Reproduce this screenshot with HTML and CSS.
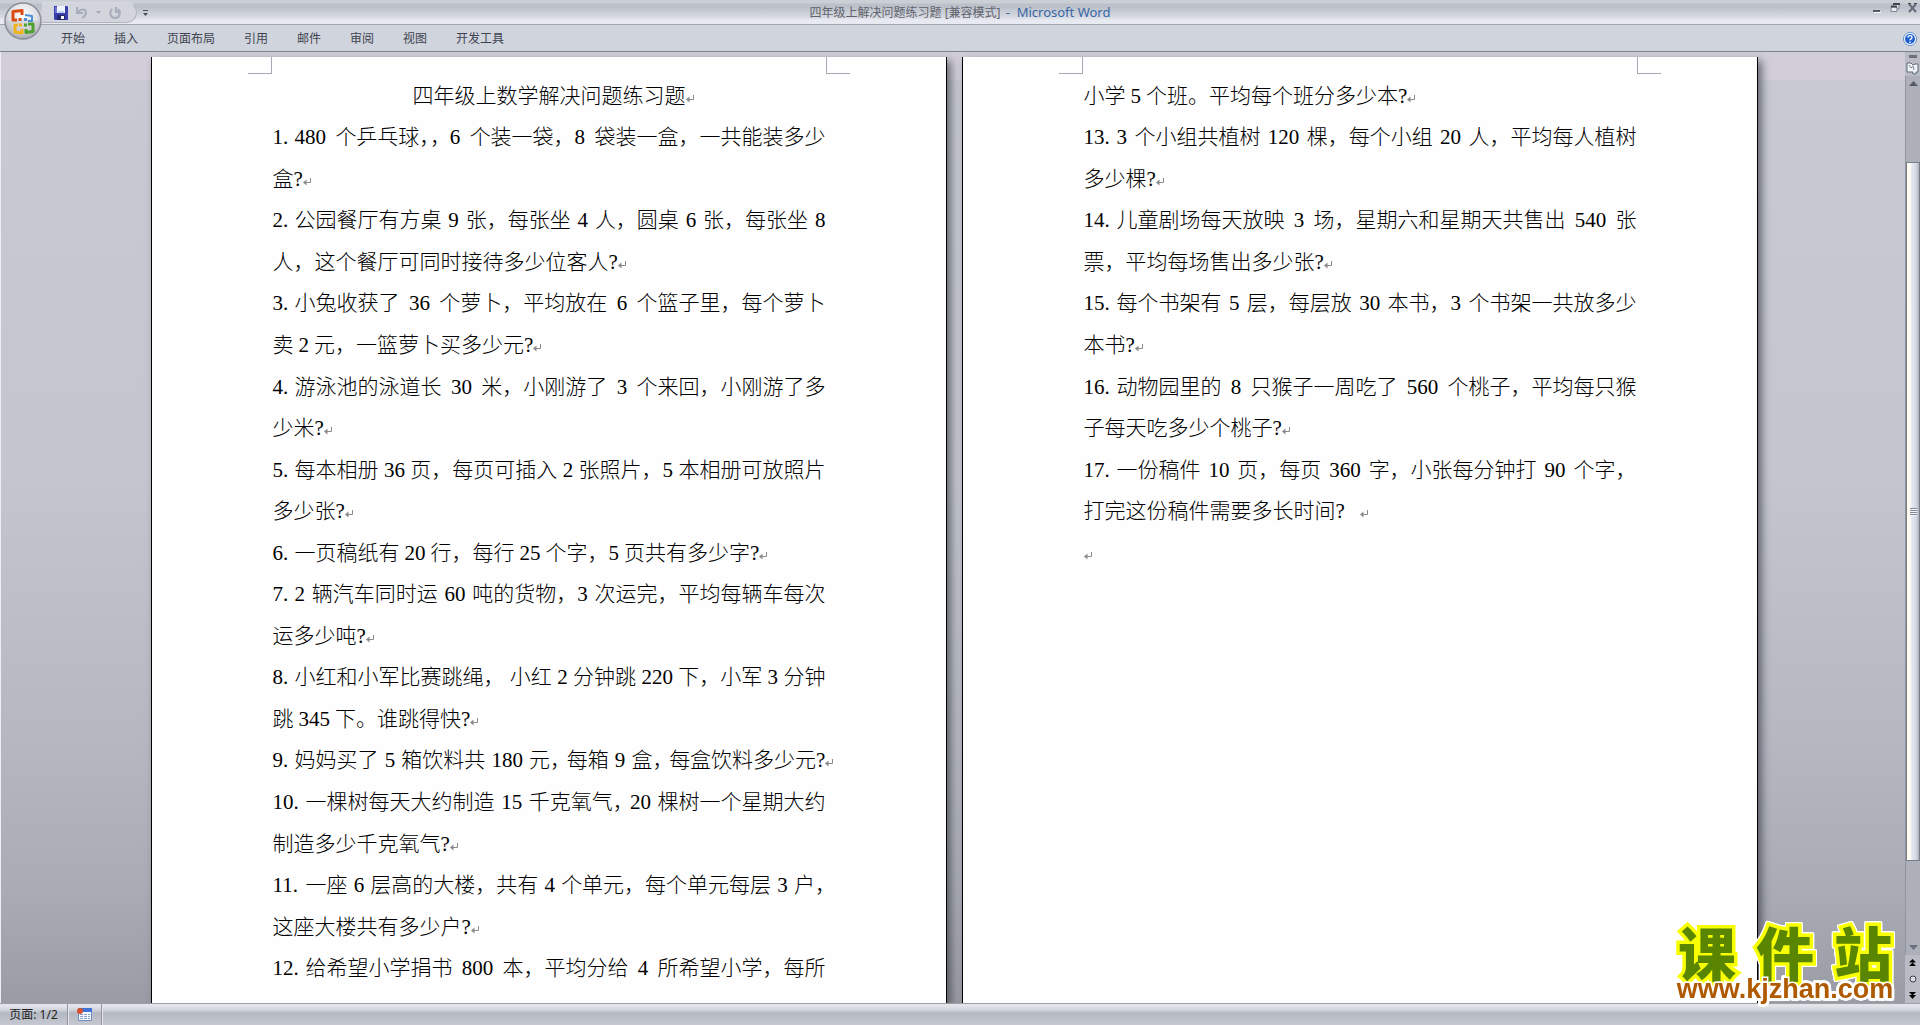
FILE: index.html
```html
<!DOCTYPE html>
<html lang="zh-CN">
<head>
<meta charset="utf-8">
<meta name="viewport" content="width=device-width, initial-scale=1">
<title>四年级上解决问题练习题 [兼容模式] - Microsoft Word</title>
<link rel="stylesheet" href="styles.css">
</head>
<body>
<svg class="defs" aria-hidden="true">
  <symbol id="ret" viewBox="0 0 9 9"><path d="M7.5 1v4.5H2" fill="none" stroke="#8a8a8a"/><path d="M0 5.500l3.500-3v6z" fill="#8a8a8a"/></symbol>
</svg>

<header class="titlebar">
  <div class="quick">
    <div class="pill">
      <button aria-label="保存"><svg width="14" height="14" viewBox="0 0 14 14"><path d="M1 0h12l1 1v13H1l-1-1V0z" fill="#3a3fae"/><path d="M1 1h3v6H1z" fill="#6a78dc"/><path d="M3 0h8v7H3z" fill="#eef3ff"/><path d="M4 5h6v2H4z" fill="#b9d0f6"/><path d="M3 9h8v5H3z" fill="#25286c"/><path d="M7 10h3v3H7z" fill="#fff"/></svg></button>
      <button aria-label="撤消"><svg width="14" height="14" viewBox="0 0 14 14"><path d="M2 1v6h6M2.500 6.500C5 3 11 2 11 6.500c0 3-2 4-4 5.500" fill="none" stroke="#a9adbb" stroke-width="2"/></svg></button>
      <button class="drop" aria-label="撤消列表"><svg width="5" height="4" viewBox="0 0 5 4"><path d="M0 0h5L2.500 3z" fill="#a4a8b4"/></svg></button>
      <button aria-label="重复"><svg width="14" height="14" viewBox="0 0 14 14"><path d="M4 3C1 6 2 12 7 12s6-6 3-9M8 1v5h5" fill="none" stroke="#a9adbb" stroke-width="2"/></svg></button>
    </div>
    <button class="custom" aria-label="自定义快速访问工具栏"><svg width="5" height="6" viewBox="0 0 5 6"><path d="M0 0h5v1H0zM0 3h5L2.500 6z" fill="#4a4d55"/></svg></button>
  </div>
  <h1 class="caption">四年级上解决问题练习题 [兼容模式] <span class="app">- &nbsp;Microsoft Word</span></h1>
  <div class="controls">
    <button aria-label="最小化"><svg width="10" height="10" viewBox="0 0 10 10"><path d="M1 7h7v2H1z" fill="#54575f"/><path d="M2 9h7v1H2z" fill="#fff"/></svg></button>
    <button aria-label="还原"><svg width="10" height="10" viewBox="0 0 10 10"><path d="M3 1.500h6V6H7M1 4h6v4.500H1z" fill="#e8ebf1" stroke="#7b8496"/><path d="M3 1h7M1 3.500h6" stroke="#42454c" stroke-width="2"/></svg></button>
    <button aria-label="关闭"><svg width="10" height="10" viewBox="0 0 10 10"><path d="M1 1l7 8M8 1L1 9" stroke="#656d7d" stroke-width="2"/><path d="M0 .5h3M6 .5h3" stroke="#42454c"/></svg></button>
  </div>
  <button class="orb" aria-label="Office 按钮">
    <svg width="38" height="38" viewBox="0 0 38 38">
      <defs><radialGradient id="orb" cx=".5" cy=".35" r=".65"><stop offset="0" stop-color="#fff"/><stop offset=".6" stop-color="#dfe1e6"/><stop offset="1" stop-color="#a3a7b0"/></radialGradient></defs>
      <circle cx="19" cy="19" r="18" fill="url(#orb)" stroke="#8b8e96" stroke-width="1.500"/>
      <path d="M3 20a16 12 0 0 0 32 0c-8-4-24-4-32 0z" fill="#c4c7ce" opacity=".55"/>
      <g fill="none" stroke-width="3" stroke-linejoin="round">
        <path d="M13 18H9V9.500l9-1V13" stroke="#dc4a12"/>
        <path d="M21 13l7 1V19h-4" stroke="#4b8fd8" stroke-width="2"/>
        <path d="M14 23h-3v7l7 1v-4" stroke="#f2b21c"/>
        <path d="M24 22h5v7.500l-7 1V27" stroke="#4fa02c"/>
      </g>
      <path d="M14.500 16h3v3h-3z" fill="#dc4a12"/><path d="M20 16h3v3h-3z" fill="#4b8fd8"/><path d="M15 21.500h3v3h-3z" fill="#f2b21c"/><path d="M20 21.500h3v3h-3z" fill="#4fa02c"/>
    </svg>
  </button>
</header>

<nav class="ribbon">
  <div class="tabs">
    <button>开始</button><button>插入</button><button>页面布局</button><button>引用</button><button>邮件</button><button>审阅</button><button>视图</button><button>开发工具</button>
  </div>
  <button class="help" aria-label="帮助"><svg width="14" height="14" viewBox="0 0 14 14"><circle cx="7" cy="7" r="6.500" fill="#fff" stroke="#5f8fc9"/><circle cx="7" cy="7" r="5" fill="#1f5fd0"/><path d="M5 5.500c0-2.500 4-2.500 4 0 0 1.500-2 1.300-2 2.800M7 9.500V11" fill="none" stroke="#fff" stroke-width="1.400"/></svg></button>
</nav>

<div class="work">
  <main class="desk">
    <section class="page" aria-label="第 1 页">
      <div class="marks"><i class="mark-l"></i><i class="mark-r"></i></div>
      <article class="text">
        <h2><span class="line mid"><span>四年级上数学解决问题练习题<svg class="ret"><use href="#ret"/></svg></span></span></h2>
        <p><span class="line fill"><span><b class="n1">1.</b>480</span><span>个乒乓球，<b class="half">，</b></span><span>6</span><span>个装一袋，8</span><span>袋装一盒，一共能装多少</span></span>
        <span class="line"><span>盒?<svg class="ret"><use href="#ret"/></svg></span></span></p>
        <p><span class="line fill"><span><b class="n1">2.</b>公园餐厅有方桌</span><span>9</span><span>张，每张坐</span><span>4</span><span>人，圆桌</span><span>6</span><span>张，每张坐</span><span>8</span></span>
        <span class="line"><span>人，这个餐厅可同时接待多少位客人?<svg class="ret"><use href="#ret"/></svg></span></span></p>
        <p><span class="line fill"><span><b class="n1">3.</b>小兔收获了</span><span>36</span><span>个萝卜，平均放在</span><span>6</span><span>个篮子里，每个萝卜</span></span>
        <span class="line"><span>卖</span><span>2</span><span>元，一篮萝卜买多少元?<svg class="ret"><use href="#ret"/></svg></span></span></p>
        <p><span class="line fill"><span><b class="n1">4.</b>游泳池的泳道长</span><span>30</span><span>米，小刚游了</span><span>3</span><span>个来回，小刚游了多</span></span>
        <span class="line"><span>少米?<svg class="ret"><use href="#ret"/></svg></span></span></p>
        <p><span class="line fill"><span><b class="n1">5.</b>每本相册</span><span>36</span><span>页，每页可插入</span><span>2</span><span>张照片，5</span><span>本相册可放照片</span></span>
        <span class="line"><span>多少张?<svg class="ret"><use href="#ret"/></svg></span></span></p>
        <p><span class="line"><span><b class="n1">6.</b>一页稿纸有</span><span>20</span><span>行，每行</span><span>25</span><span>个字，5</span><span>页共有多少字?<svg class="ret"><use href="#ret"/></svg></span></span></p>
        <p><span class="line fill"><span><b class="n1">7.</b>2</span><span>辆汽车同时运</span><span>60</span><span>吨的货物，3</span><span>次运完，平均每辆车每次</span></span>
        <span class="line"><span>运多少吨?<svg class="ret"><use href="#ret"/></svg></span></span></p>
        <p><span class="line fill"><span><b class="n1">8.</b>小红和小军比赛跳绳，</span><span>小红</span><span>2</span><span>分钟跳</span><span>220</span><span>下，小军</span><span>3</span><span>分钟</span></span>
        <span class="line"><span>跳</span><span>345</span><span>下。谁跳得快?<svg class="ret"><use href="#ret"/></svg></span></span></p>
        <p><span class="line fill"><span><b class="n1">9.</b>妈妈买了</span><span>5</span><span>箱饮料共</span><span>180</span><span>元<b class="half">，</b></span><span>每箱</span><span>9</span><span>盒<b class="half">，</b></span><span>每盒饮料多少元?<svg class="ret"><use href="#ret"/></svg></span></span></p>
        <p><span class="line fill"><span><b class="n2">10.</b>一棵树每天大约制造</span><span>15</span><span>千克氧气<b class="half">，</b></span><span>20</span><span>棵树一个星期大约</span></span>
        <span class="line"><span>制造多少千克氧气?<svg class="ret"><use href="#ret"/></svg></span></span></p>
        <p><span class="line fill"><span><b class="n2">11.</b>一座</span><span>6</span><span>层高的大楼，共有</span><span>4</span><span>个单元，每个单元每层</span><span>3</span><span>户<b class="half">，</b></span></span>
        <span class="line"><span>这座大楼共有多少户?<svg class="ret"><use href="#ret"/></svg></span></span></p>
        <p><span class="line fill"><span><b class="n2">12.</b>给希望小学捐书</span><span>800</span><span>本，平均分给</span><span>4</span><span>所希望小学，每所</span></span></p>
      </article>
    </section>
    <section class="page" aria-label="第 2 页">
      <div class="marks"><i class="mark-l"></i><i class="mark-r"></i></div>
      <article class="text">
        <p><span class="line"><span>小学</span><span>5</span><span>个班。平均每个班分多少本?<svg class="ret"><use href="#ret"/></svg></span></span></p>
        <p><span class="line fill"><span><b class="n2">13.</b>3</span><span>个小组共植树</span><span>120</span><span>棵，每个小组</span><span>20</span><span>人，平均每人植树</span></span>
        <span class="line"><span>多少棵?<svg class="ret"><use href="#ret"/></svg></span></span></p>
        <p><span class="line fill"><span><b class="n2">14.</b>儿童剧场每天放映</span><span>3</span><span>场，星期六和星期天共售出</span><span>540</span><span>张</span></span>
        <span class="line"><span>票，平均每场售出多少张?<svg class="ret"><use href="#ret"/></svg></span></span></p>
        <p><span class="line fill"><span><b class="n2">15.</b>每个书架有</span><span>5</span><span>层，每层放</span><span>30</span><span>本书，3</span><span>个书架一共放多少</span></span>
        <span class="line"><span>本书?<svg class="ret"><use href="#ret"/></svg></span></span></p>
        <p><span class="line fill"><span><b class="n2">16.</b>动物园里的</span><span>8</span><span>只猴子一周吃了</span><span>560</span><span>个桃子，平均每只猴</span></span>
        <span class="line"><span>子每天吃多少个桃子?<svg class="ret"><use href="#ret"/></svg></span></span></p>
        <p><span class="line fill"><span><b class="n2">17.</b>一份稿件</span><span>10</span><span>页，每页</span><span>360</span><span>字，小张每分钟打</span><span>90</span><span>个字，</span></span>
        <span class="line wide"><span>打完这份稿件需要多长时间?</span><span><svg class="ret"><use href="#ret"/></svg></span></span></p>
        <p><span class="line"><span><svg class="ret"><use href="#ret"/></svg></span></span></p>
      </article>
    </section>
  </main>

  <aside class="scroll" aria-label="垂直滚动条">
    <i class="split"></i>
    <button class="ruler" aria-label="标尺"><svg width="13" height="13" viewBox="0 0 13 13"><path d="M1 1h4l2 2 2-1h3v8h-2v2H7v-2H1z" fill="#f1f2f5" stroke="#5d6a7c"/><path d="M3 3l2 3 2-2 1 4" fill="none" stroke="#7b8798"/></svg></button>
    <div class="track">
      <button aria-label="向上滚动"><svg width="9" height="5" viewBox="0 0 9 5"><path d="M0 5L4.500 0 9 5z" fill="#555963"/></svg></button>
      <div class="thumb"><i></i></div>
      <button class="down" aria-label="向下滚动"><svg width="9" height="5" viewBox="0 0 9 5"><path d="M0 0h9L4.500 5z" fill="#6b7080"/></svg></button>
    </div>
    <div class="browse">
      <button aria-label="前一页"><svg width="7" height="8" viewBox="0 0 7 8"><path d="M0 3.500L3.500 0 7 3.500zM0 7l3.500-3.500L7 7z"/></svg></button>
      <button aria-label="选择浏览对象"><svg width="8" height="8" viewBox="0 0 8 8"><circle cx="4" cy="4" r="3" fill="#d9dbe0" stroke="#3e4148"/></svg></button>
      <button aria-label="下一页"><svg width="7" height="8" viewBox="0 0 7 8"><path d="M0 1h7L3.500 4.500zM0 4h7L3.500 8z"/></svg></button>
    </div>
  </aside>

  <a class="brand" href="http://www.kjzhan.com">
    <span class="name"><span>课</span><span>件</span><span>站</span></span>
    <span class="site">www.kjzhan.com</span>
  </a>
</div>

<footer class="status">
  <button class="pages">页面: 1/2</button>
  <button class="macro" aria-label="录制宏"><svg width="15" height="13" viewBox="0 0 15 13"><path d="M1.500.5h13v12h-13z" fill="#f4f7fd" stroke="#6f8cc4"/><path d="M2 0h13v4H2z" fill="#3f74d6"/><path d="M3 6.500h10M3 8.500h10M3 10.500h10" stroke="#8aa3cf" stroke-dasharray="3 1"/><circle cx="3" cy="3" r="3" fill="#d8502e"/></svg></button>
</footer>
</body>
</html>
```
FILE: styles.css
```css
* { box-sizing: border-box; }

body {
  margin: 0;
  height: 100vh;
  display: flex;
  flex-direction: column;
  overflow: hidden;
  font: 12px/16px "Noto Sans", "Noto Sans CJK SC", sans-serif;
  color: #3f4350;
  background: #c7cad2;
}

button {
  margin: 0;
  padding: 0;
  border: 0;
  background: none;
  font: inherit;
  color: inherit;
  display: flex;
  align-items: center;
  justify-content: center;
}

b { font-weight: inherit; }
.defs { position: absolute; width: 0; height: 0; }

/* Title bar */
.titlebar {
  position: relative;
  flex: none;
  height: 25px;
  display: grid;
  grid-template-columns: 1fr auto 1fr;
  border-bottom: 1px solid #a3a6b1;
  background: linear-gradient(#cbcfd6 0 3px, #bcc0c9 4px 7px, #c9cdd5 12px, #d6d9df 17px, #e7eaf1 20px);
}
.quick { display: flex; align-items: center; padding-left: 42px; }
.pill {
  height: 21px;
  display: flex;
  align-items: center;
  gap: 7px;
  padding: 0 14px 0 12px;
  border: 1px solid #b2b5be;
  border-left: 0;
  border-top-color: #d9dbe1;
  border-radius: 0 11px 11px 0;
  background: #d2d5dc;
}
.custom { margin-left: 6px; }
.caption {
  margin: 0;
  font-size: 12px;
  font-weight: 400;
  line-height: 25px;
  color: #5f636d;
}
.app { padding-left: 2px; font-size: 13px; color: #3767a8; }
.controls { display: flex; justify-content: flex-end; gap: 8px; padding: 2px 2px 0 0; align-items: flex-start; }
.controls button { height: 11px; }
.orb { position: absolute; left: 4px; top: 2px; z-index: 2; }

/* Ribbon tabs */
.ribbon {
  flex: none;
  height: 27px;
  display: flex;
  justify-content: space-between;
  padding: 1px 3px 0 61px;
  background: #d0d4dd;
  border-bottom: 1px solid #7d818c;
}
.tabs { display: flex; gap: 29px; }

/* Work area */
.work {
  position: relative;
  flex: 1;
  min-height: 0;
  display: flex;
  border-left: 1px solid #eceef2;
}
.desk {
  flex: 1;
  display: flex;
  justify-content: center;
  gap: 15px;
  padding: 5px 0 0 2px;
  overflow: hidden;
  background: linear-gradient(#d1ced9 28px, #c7cad2 28px, #c3c6cf 45%, #b5b8c1 72%, #a9acb5 88%, #9a9ca5);
}
.page {
  flex: none;
  width: 796px;
  display: flex;
  flex-direction: column;
  background: #fefefe;
  border: solid #000;
  border-width: 0 1px;
  box-shadow: 4px 4px 8px rgba(40, 42, 52, .6);
}
.marks { display: flex; justify-content: space-between; padding: 0 96px; }
.marks i { width: 24px; height: 17px; border-bottom: 1px solid #a7a8b4; }
.mark-l { border-right: 1px solid #a7a8b4; }
.mark-r { border-left: 1px solid #a7a8b4; }

.text {
  flex: 1;
  display: grid;
  grid-template-rows: repeat(22, minmax(28px, 1fr));
  padding: 1px 120px 14px 121px;
  font-family: "Liberation Serif", "Noto Sans CJK SC", serif;
  font-size: 21px;
  font-weight: 300;
  line-height: 30px;
  color: #000;
}
.text h2, .text p { display: contents; font: inherit; }
.line { display: flex; align-items: center; gap: 5px; white-space: nowrap; }
.fill { justify-content: space-between; gap: 0; }
.mid { justify-content: center; }
.wide { gap: 15px; }
.n1, .n2 { display: inline-block; width: 22px; }
.n2 { width: 33px; }
.half { font-feature-settings: "halt"; }
.ret { width: 9px; height: 9px; margin-right: -9px; }

/* Scroll bar */
.scroll {
  flex: none;
  width: 15px;
  display: flex;
  flex-direction: column;
  background: #b9bcc5;
}
.split { height: 3px; margin: 3px 3px 2px 4px; background: #6d7078; }
.ruler { height: 16px; }
.track {
  flex: 1;
  display: flex;
  flex-direction: column;
  border-left: 1px solid #8f939d;
  background: #adb0b9;
}
.track button { height: 15px; }
.thumb {
  flex: 0 1 699px;
  margin-top: 71px;
  display: flex;
  align-items: center;
  justify-content: center;
  border: 1px solid #797d88;
  background: linear-gradient(90deg, #fffdf2 3px, #e4e6ef 5px, #d6d9e3 9px, #aeb2be);
}
.thumb i { width: 7px; height: 8px; background: repeating-linear-gradient(#848894 0 1px, #f4f5f8 1px 2px); }
.track .down { margin-top: auto; }
.browse { display: flex; flex-direction: column; height: 48px; justify-content: space-around; }

/* Site mark over the corner of the document */
.brand {
  position: absolute;
  right: 18px;
  bottom: 0;
  width: 234px;
  text-decoration: none;
  filter: drop-shadow(1px 0 #fff) drop-shadow(-1px 0 #fff) drop-shadow(0 1px #fff) drop-shadow(0 -1px #fff);
}
.name {
  display: flex;
  justify-content: space-around;
  font: 900 58px/48px "Noto Sans CJK SC", sans-serif;
  color: #5a8500;
  -webkit-text-stroke: 7px #f8ff00;
  paint-order: stroke fill;
}
.site {
  display: block;
  text-align: center;
  font: 700 27px/28px "Liberation Sans", sans-serif;
  color: #b05a00;
  -webkit-text-stroke: 3px #fff;
  paint-order: stroke fill;
}

/* Status bar */
.status {
  flex: none;
  height: 22px;
  display: flex;
  border-top: 1px solid #9da0a9;
  background: linear-gradient(#e2e4ea 2px, #d0d3da 6px, #b4b8c2 9px, #c4c7cf 20px);
  color: #222;
}
.status button { border-right: 1px solid #92959e; box-shadow: 1px 0 #e4e6eb; }
.pages { width: 68px; }
.macro { width: 34px; }
```
